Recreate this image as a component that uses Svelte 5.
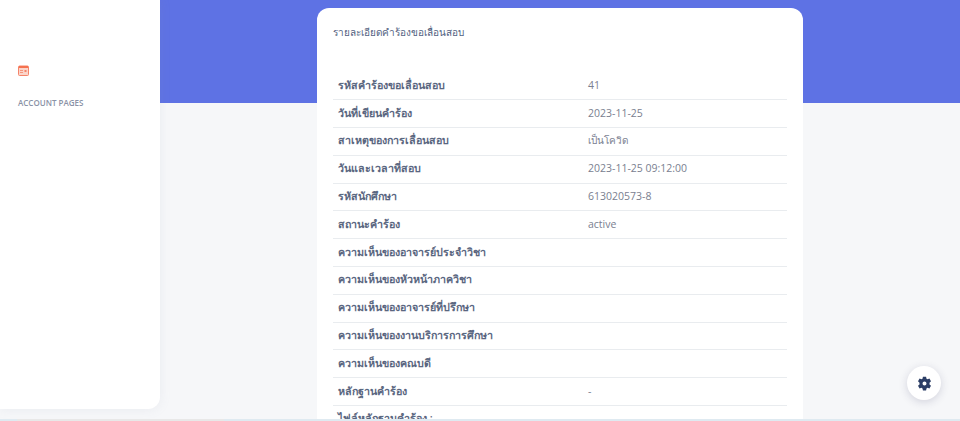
<script>
  const rows = [
    ['รหัสคำร้องขอเลื่อนสอบ', '41'],
    ['วันที่เขียนคำร้อง', '2023-11-25'],
    ['สาเหตุของการเลื่อนสอบ', 'เป็นโควิด'],
    ['วันและเวลาที่สอบ', '2023-11-25 09:12:00'],
    ['รหัสนักศึกษา', '613020573-8'],
    ['สถานะคำร้อง', 'active'],
    ['ความเห็นของอาจารย์ประจำวิชา', ''],
    ['ความเห็นของหัวหน้าภาควิชา', ''],
    ['ความเห็นของอาจารย์ที่ปรึกษา', ''],
    ['ความเห็นของงานบริการการศึกษา', ''],
    ['ความเห็นของคณบดี', ''],
    ['หลักฐานคำร้อง', '-'],
    ['ไฟล์หลักฐานคำร้อง :', '']
  ];

  const isThai = (s) => /[\u0E00-\u0E7F]/.test(s);
</script>

<div class="layout">
  <aside class="sidebar">
    <svg class="cal" width="11" height="11" viewBox="0 0 11 11">
      <rect x="0.5" y="1" width="10" height="9.5" rx="1" fill="#fbd5ca" stroke="#f5846a" stroke-width="1" />
      <rect x="1" y="1" width="9" height="2" fill="#f5724f" />
      <rect x="2" y="5" width="3" height="1" fill="#f5957c" />
      <rect x="6.5" y="5" width="2" height="2" fill="#f5846a" />
      <rect x="2" y="7" width="3" height="1" fill="#f5957c" />
    </svg>
    <h6>ACCOUNT PAGES</h6>
  </aside>

  <main class="main">
    <div class="hero"></div>
    <section class="card">
      <h3>รายละเอียดคำร้องขอเลื่อนสอบ</h3>
      <table>
        <tbody>
          {#each rows as row}
            <tr>
              <th>{row[0]}</th>
              <td class:thai={isThai(row[1])}>{row[1]}</td>
            </tr>
          {/each}
        </tbody>
      </table>
    </section>
  </main>

  <button class="settings" aria-label="settings">
    <svg width="15" height="15" viewBox="0 0 24 24">
      <path fill="#2c3e66" fill-rule="evenodd" d="M9.5 1h5l.7 3.2 1.6.9 3.1-1 2.500 4.300-2.400 2.200v2.800l2.400 2.200-2.500 4.300-3.100-1-1.600.9-.7 3.200h-5l-.7-3.200-1.600-.9-3.100 1-2.500-4.300 2.400-2.200v-2.800L1.600 8.400l2.500-4.300 3.100 1 1.600-.9zM12 8.800a3.200 3.200 0 1 0 0 6.400 3.200 3.200 0 0 0 0-6.400z" />
    </svg>
  </button>

  <div class="strip"><div class="strip-part"></div></div>
</div>

<style>
  :global(body) {
    margin: 0;
    background: #f6f7f9;
    overflow: hidden;
  }

  .layout {
    display: flex;
    height: 421px;
    overflow: hidden;
    position: relative;
    font-family: "Open Sans", "Noto Sans", sans-serif;
    background: #f6f7f9;
  }

  .sidebar {
    width: 160px;
    height: 409px;
    flex: none;
    box-sizing: border-box;
    padding: 65px 0 0 18px;
    background: #fff;
    border-radius: 0 0 12px 0;
    box-shadow: 0 0 12px rgba(136, 152, 170, 0.12);
    position: relative;
    z-index: 1;
  }

  .cal {
    display: block;
  }

  h6 {
    margin: 21px 0 0;
    font-size: 8px;
    line-height: 12px;
    font-weight: 600;
    color: #8a92a6;
  }

  .main {
    flex: 1;
    min-width: 0;
  }

  .hero {
    height: 103px;
    background: #5e72e4;
  }

  .card {
    width: 486px;
    margin: -95px 0 0 157px;
    box-sizing: border-box;
    padding: 16px 16px 0;
    background: #fff;
    border-radius: 12px 12px 0 0;
    position: relative;
  }

  h3 {
    margin: 0 0 32px;
    font-size: 10px;
    line-height: 16px;
    font-weight: 500;
    color: #525f7f;
  }

  table {
    width: 100%;
    border-collapse: collapse;
    table-layout: fixed;
  }

  th, td {
    height: 27.8px;
    box-sizing: border-box;
    padding: 0 5px 2px;
    border-bottom: 1px solid #e9ecef;
    text-align: left;
    line-height: 16px;
  }

  th {
    width: 250px;
    font-size: 10.7px;
    font-weight: 600;
    color: #5a6680;
  }

  td {
    font-size: 10.5px;
    color: #7a8090;
  }

  td.thai {
    font-size: 10px;
  }

  .settings {
    position: absolute;
    left: 907px;
    top: 366px;
    width: 34px;
    height: 34px;
    padding: 0;
    border: 0;
    border-radius: 50%;
    background: #fff;
    box-shadow: 0 2px 8px rgba(50, 50, 93, 0.18);
    display: flex;
    align-items: center;
    justify-content: center;
    z-index: 2;
  }

  .strip {
    position: absolute;
    left: 0;
    right: 0;
    bottom: 0;
    height: 2px;
    background: #dfeaf1;
    z-index: 3;
  }

  .strip-part {
    width: 207px;
    height: 100%;
    margin-left: 17px;
    background: #e8e8e8;
  }
</style>
